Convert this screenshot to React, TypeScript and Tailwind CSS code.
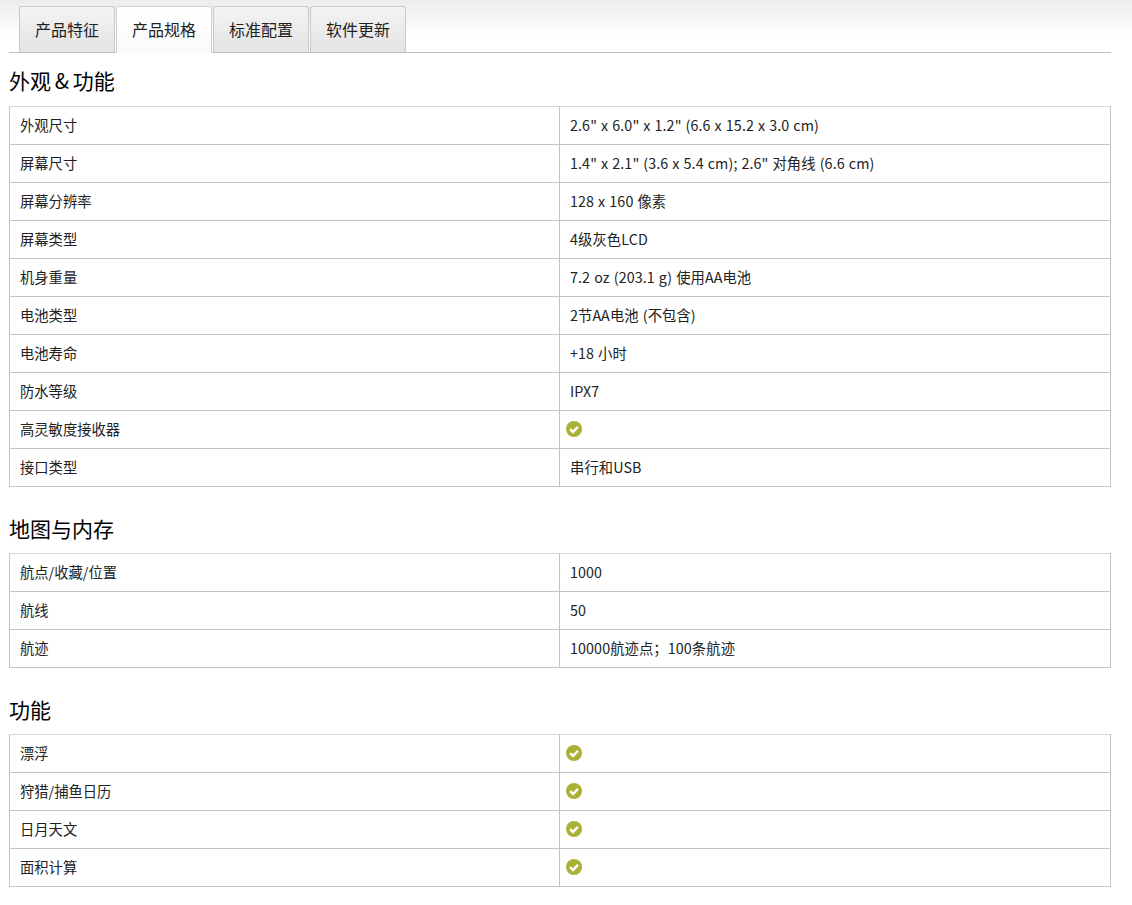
import React from 'react';

const tabs = ['产品特征', '产品规格', '标准配置', '软件更新'];

type Row = [string, string | null];

const appearance: Row[] = [
  ['外观尺寸', '2.6" x 6.0" x 1.2" (6.6 x 15.2 x 3.0 cm)'],
  ['屏幕尺寸', '1.4" x 2.1" (3.6 x 5.4 cm); 2.6" 对角线 (6.6 cm)'],
  ['屏幕分辨率', '128 x 160 像素'],
  ['屏幕类型', '4级灰色LCD'],
  ['机身重量', '7.2 oz (203.1 g) 使用AA电池'],
  ['电池类型', '2节AA电池 (不包含)'],
  ['电池寿命', '+18 小时'],
  ['防水等级', 'IPX7'],
  ['高灵敏度接收器', null],
  ['接口类型', '串行和USB'],
];

const maps: Row[] = [
  ['航点/收藏/位置', '1000'],
  ['航线', '50'],
  ['航迹', '10000航迹点；100条航迹'],
];

const features: Row[] = [
  ['漂浮', null],
  ['狩猎/捕鱼日历', null],
  ['日月天文', null],
  ['面积计算', null],
];

const Check = () => (
  <svg width="16" height="16" viewBox="0 0 16 16" className="-ml-1 block">
    <circle cx="8" cy="8" r="8" fill="#a9b234" />
    <path d="M4.2 8.2 L7 11 L11.9 5.9" fill="none" stroke="#ffffff" strokeWidth="2.5" />
  </svg>
);

const SpecTable = ({ rows }: { rows: Row[] }) => (
  <table className="w-full table-fixed border-collapse text-[14.3px] leading-[20px] text-[#222222]">
    <tbody>
      {rows.map(([label, value]) => (
        <tr key={label} className="h-[38px] first:[&>td]:border-t-[#d8d8d8]">
          <td className="w-[550px] border border-[#c4c4c4] px-[10px] pt-0 pb-[2px]">{label}</td>
          <td className="border border-[#c4c4c4] px-[10px] pt-0 pb-[2px] tracking-[0.1px] [word-spacing:0.7px]">
            {value === null ? <Check /> : value}
          </td>
        </tr>
      ))}
    </tbody>
  </table>
);

export default function App() {
  return (
    <div className="h-[905px] overflow-hidden bg-white bg-gradient-to-b from-[#ececec] to-white bg-[length:100%_36px] bg-no-repeat px-[9px] pt-[6px] font-['Noto_Sans_CJK_SC','Noto_Sans',sans-serif] text-[#222222]">
      <div className="w-[1102px]">
        <div className="flex h-[47px] gap-px border-b border-[#bdbdbd] pl-[10px]">
          {tabs.map((tab, i) => (
            <div
              key={tab}
              className={
                i === 1
                  ? 'z-10 flex h-[47px] w-[96px] items-center justify-center rounded-t-[3px] border border-b-0 border-[#d0d0d0] bg-gradient-to-b from-white to-[#fafafa] pb-[2px] text-base'
                  : 'flex h-[46px] w-[96px] items-center justify-center rounded-t-[3px] border border-b-0 border-[#c8c8c8] bg-gradient-to-b from-[#f3f3f3] to-[#e4e4e4] pb-[2px] text-base'
              }
            >
              {tab}
            </div>
          ))}
        </div>

        <h2 className="flex h-[53px] items-center pt-[2px] text-[21px] font-normal text-black [word-spacing:-1px]">外观 &amp; 功能</h2>
        <SpecTable rows={appearance} />

        <h2 className="mt-[20px] flex h-[46px] items-center pb-[2px] text-[21px] font-normal text-black">地图与内存</h2>
        <SpecTable rows={maps} />

        <h2 className="mt-[20px] flex h-[46px] items-center pb-[2px] text-[21px] font-normal text-black">功能</h2>
        <SpecTable rows={features} />
      </div>
    </div>
  );
}
